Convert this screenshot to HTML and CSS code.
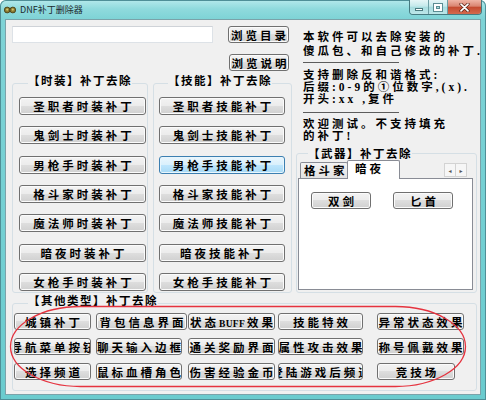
FILE: index.html
```html
<!DOCTYPE html>
<html lang="zh-CN">
<head>
<meta charset="utf-8">
<title>DNF补丁删除器</title>
<link rel="stylesheet" href="styles.css">
</head>
<body>
<div class="window">
  <div class="titlebar">
    <svg class="app-icon" width="12" height="8" viewBox="0 0 12 8">
      <rect x="2.5" y="2.5" width="7" height="3" fill="#5d5220"/>
      <circle cx="3.2" cy="4" r="2.9" fill="#8a7b33" stroke="#3f3712" stroke-width="0.8"/>
      <circle cx="8.8" cy="4" r="2.9" fill="#8a7b33" stroke="#3f3712" stroke-width="0.8"/>
      <circle cx="3.2" cy="3.6" r="1.1" fill="#d3c46e"/>
      <circle cx="8.8" cy="3.6" r="1.1" fill="#d3c46e"/>
    </svg>
    <span class="title">DNF补丁删除器</span>
    <div class="controls">
      <span class="ctl min"><i class="min-glyph"></i></span>
      <span class="ctl max"><i class="max-glyph"></i></span>
      <span class="ctl close">
        <svg width="11" height="9" viewBox="0 0 11 9">
          <path d="M2 1.2 L9 7.8 M9 1.2 L2 7.8" stroke="#5b2418" stroke-width="3.2" stroke-linecap="round"/>
          <path d="M2 1.2 L9 7.8 M9 1.2 L2 7.8" stroke="#ffffff" stroke-width="1.7" stroke-linecap="round"/>
        </svg>
      </span>
    </div>
  </div>
  <div class="client">
    <div class="top">
      <div class="left">
        <div class="row1">
          <input class="path" type="text" value="">
          <button class="btn browse-dir"><span>浏览目录</span></button>
        </div>
        <div class="row2">
          <button class="btn browse-help"><span>浏览说明</span></button>
        </div>
        <div class="groups">
          <fieldset class="group g-fashion">
            <legend>【时装】补丁去除</legend>
            <div class="stack">
              <button class="btn"><span>圣职者时装补丁</span></button>
              <button class="btn"><span>鬼剑士时装补丁</span></button>
              <button class="btn"><span>男枪手时装补丁</span></button>
              <button class="btn"><span>格斗家时装补丁</span></button>
              <button class="btn"><span>魔法师时装补丁</span></button>
              <button class="btn"><span>暗夜时装补丁</span></button>
              <button class="btn"><span>女枪手时装补丁</span></button>
            </div>
          </fieldset>
          <fieldset class="group g-skill">
            <legend>【技能】补丁去除</legend>
            <div class="stack">
              <button class="btn"><span>圣职者技能补丁</span></button>
              <button class="btn"><span>鬼剑士技能补丁</span></button>
              <button class="btn hot"><span>男枪手技能补丁</span></button>
              <button class="btn"><span>格斗家技能补丁</span></button>
              <button class="btn"><span>魔法师技能补丁</span></button>
              <button class="btn"><span>暗夜技能补丁</span></button>
              <button class="btn"><span>女枪手技能补丁</span></button>
            </div>
          </fieldset>
        </div>
      </div>
      <div class="right">
        <p class="para p1">本软件可以去除安装的<br>傻瓜包、和自己修改的补丁<span class="lat">.</span></p>
        <hr class="rule r1">
        <p class="para p2">支持删除反和谐格式<span class="lat">:</span><br>后缀<span class="lat">:0-9</span>的①位数字<span class="lat">,(x).</span><br>开头<span class="lat">:xx ,</span>复件</p>
        <hr class="rule r2">
        <p class="para p3">欢迎测试。不支持填充<br>的补丁<span class="lat">!</span></p>
        <fieldset class="group g-weapon">
          <legend>【武器】补丁去除</legend>
          <div class="tabstrip">
            <span class="tab">格斗家</span>
            <span class="tab active">暗夜</span>
            <span class="scroll"><span class="arr">&#9666;</span><span class="arr">&#9656;</span></span>
          </div>
          <div class="pane">
            <button class="btn wbtn"><span>双剑</span></button>
            <button class="btn wbtn"><span>匕首</span></button>
          </div>
        </fieldset>
      </div>
    </div>
    <fieldset class="group g-other">
      <legend>【其他类型】补丁去除</legend>
      <div class="other-grid">
        <button class="btn w77"><span>城镇补丁</span></button>
        <button class="btn w91"><span>背包信息界面</span></button>
        <button class="btn w87"><span>状态<b class="lat buff">BUFF</b>效果</span></button>
        <button class="btn w85"><span>技能特效</span></button>
        <button class="btn w87"><span>异常状态效果</span></button>

        <button class="btn w77"><span>导航菜单按钮</span></button>
        <button class="btn w86"><span>聊天输入边框</span></button>
        <button class="btn w87"><span>通关奖励界面</span></button>
        <button class="btn w85"><span>属性攻击效果</span></button>
        <button class="btn w87"><span>称号佩戴效果</span></button>

        <button class="btn w77"><span>选择频道</span></button>
        <button class="btn w86"><span>鼠标血槽角色</span></button>
        <button class="btn w87"><span>伤害经验金币</span></button>
        <button class="btn w85"><span>登陆游戏后频道</span></button>
        <button class="btn w78"><span>竞技场</span></button>
      </div>
    </fieldset>
  </div>
  <svg class="mark" width="486" height="400" viewBox="0 0 486 400">
    <rect x="10.5" y="306.5" width="455" height="80" rx="70" ry="40" fill="none" stroke="#e5333f" stroke-width="1.3"/>
  </svg>
</div>
</body>
</html>
```

FILE: styles.css
```css
* { box-sizing: border-box; }
html, body { margin: 0; padding: 0; background: #ffffff; }
body { width: 486px; height: 400px; overflow: hidden; }

.window {
  position: relative;
  width: 486px;
  height: 400px;
  display: flex;
  flex-direction: column;
  background: linear-gradient(180deg, #b4e9eb 0px, #8fdadd 9px, #7ed3d6 19px, #72cfd2 60%, #6acbce 100%);
  border-radius: 6px 6px 0 0;
  box-shadow: inset 0 0 0 1px #4f8f97;
  font-family: "Noto Sans CJK SC", sans-serif;
  font-size: 11.5px;
  font-weight: 700;
  letter-spacing: 3px;
  color: #000;
}
.lat { font-family: "Liberation Serif", serif; font-weight: 700; line-height: 0; }

/* title bar */
.titlebar { height: 19px; flex-shrink: 0; display: flex; align-items: flex-start; }
.app-icon { margin: 6px 0 0 4px; flex-shrink: 0; }
.title {
  margin: 4px 0 0 4px;
  font-family: "Noto Sans CJK SC", sans-serif;
  font-weight: 400;
  font-size: 9px;
  line-height: 12px;
  letter-spacing: 0;
  color: #1c2a2c;
}
.controls {
  margin-left: auto;
  margin-right: 4px;
  display: flex;
  height: 15px;
  border: 1px solid #467a80;
  border-top: 0;
  border-radius: 0 0 4px 4px;
  overflow: hidden;
}
.ctl { height: 14px; display: flex; align-items: center; justify-content: center; }
.min, .max {
  width: 19px;
  background: linear-gradient(180deg, #e6f6f7 0%, #c4e9eb 45%, #a6dcdf 50%, #bde7e9 100%);
  border-right: 1px solid #6d9ea4;
}
.min { align-items: flex-end; padding-bottom: 3px; }
.min-glyph { width: 8px; height: 3px; background: #fff; border: 1px solid #4d7b80; }
.max-glyph { width: 8px; height: 7px; border: 2px solid #fff; box-shadow: 0 0 0 1px #5b8d93, inset 0 0 0 1px #5b8d93; }
.close {
  width: 33px;
  background: linear-gradient(180deg, #efb4a6 0%, #d98470 45%, #c4492f 50%, #d46a4e 100%);
}

/* client area */
.client {
  flex: 1;
  margin: 0 5px 5px 5px;
  background: #f0f0f0;
  border: 1px solid #7ba2a9;
  padding: 6px 0 0 6px;
  overflow: hidden;
  display: flex;
  flex-direction: column;
}
.top { display: flex; align-items: flex-start; }
.left { width: 284px; flex-shrink: 0; }
.right { width: 184px; flex-shrink: 0; }

.row1, .row2 { display: flex; height: 17px; }
.row2 { margin-top: 11px; }
.path {
  width: 201px;
  height: 17px;
  margin: 0;
  border: 1px solid #dde2e7;
  border-top-color: #cfd3d8;
  background: #fff;
  padding: 0;
  flex-shrink: 0;
}

/* buttons */
.btn {
  font: inherit;
  letter-spacing: inherit;
  color: #000;
  margin: 0;
  padding: 0 0 0 3px;
  display: flex;
  align-items: center;
  justify-content: center;
  overflow: hidden;
  white-space: nowrap;
  border: 1px solid #707070;
  border-radius: 3px;
  background: linear-gradient(180deg, #f3f3f3 0%, #ececec 48%, #dedede 50%, #d0d0d0 100%);
  box-shadow: inset 0 0 0 1px #fbfbfb;
  flex-shrink: 0;
}
.btn span { flex-shrink: 0; line-height: 14px; }
.btn.hot {
  border-color: #3c7fb1;
  background: linear-gradient(180deg, #eaf6fd 0%, #d9f0fc 48%, #bee6fd 50%, #a7d9f5 100%);
  box-shadow: inset 0 0 0 1px #e8f6fd;
}
.btn.browse-dir { margin-left: 15px; width: 61px; height: 17px; }
.btn.browse-help { margin-left: 217px; width: 60px; height: 17px; }
.buff { font-size: 9.5px; letter-spacing: 0.3px; margin-right: 2px; }

/* group boxes */
.group {
  margin: 0;
  min-width: 0;
  border: 1px solid #d5dfe5;
  border-radius: 3px;
}
.group legend {
  padding: 0 0 6px 0;
  line-height: 14px;
  letter-spacing: 1.5px;
}
.groups { display: flex; gap: 5px; margin-top: 2px; }
.g-fashion { width: 136px; padding: 4px 0 1px 6px; }
.g-fashion legend { margin-left: 9px; }
.g-skill { width: 139px; padding: 4px 0 1px 5px; }
.g-skill legend { margin-left: 9px; }
.stack { display: flex; flex-direction: column; gap: 11.33px; }
.stack .btn { height: 18px; }
.g-fashion .btn { width: 127px; }
.g-skill .btn { width: 126px; }

/* right column */
.para { margin: 0; padding-left: 7px; white-space: nowrap; }
.p1 { margin-top: 3px; line-height: 14px; }
.p2 { margin-top: 5px; line-height: 12px; }
.p3 { margin-top: 4px; line-height: 12px; }
.rule { margin: 5px 0 0 7px; width: 96px; height: 0; border: 0; border-top: 1px solid #5c5c5c; }
.r2 { margin-top: 8px; }

.g-weapon { margin-top: 5px; width: 181px; padding: 0 3px 2px 1px; }
.g-weapon legend { padding-bottom: 0; margin-left: 10px; }
.tabstrip { display: flex; align-items: flex-end; height: 18px; padding-left: 2px; }
.tab {
  height: 16px;
  width: 48px;
  flex-shrink: 0;
  white-space: nowrap;
  overflow: visible;
  border: 1px solid #898c95;
  border-bottom: 0;
  border-radius: 2px 2px 0 0;
  background: linear-gradient(180deg, #f3f3f3, #e2e2e2);
  line-height: 15px;
  padding-left: 3px;
  letter-spacing: 3px;
}
.tab.active {
  height: 19px;
  width: 53px;
  margin-left: -1px;
  margin-bottom: -1px;
  background: #fff;
  line-height: 14px;
  padding-left: 7px;
  position: relative;
  z-index: 1;
}
.scroll { margin-left: auto; margin-right: 6px; align-self: flex-start; margin-top: 3px; display: flex; }
.arr {
  width: 12px;
  height: 14px;
  border: 1px solid #d3d3d3;
  background: #f6f6f6;
  font-family: "DejaVu Sans", sans-serif;
  font-weight: 400;
  font-size: 6px;
  letter-spacing: 0;
  color: #555;
  display: flex;
  align-items: center;
  justify-content: center;
}
.arr + .arr { margin-left: -1px; }
.pane {
  height: 112px;
  border: 1px solid #898c95;
  background: #fff;
  padding: 13px 0 0 12px;
  display: flex;
  gap: 22px;
  align-items: flex-start;
}
.btn.wbtn { width: 60px; height: 17px; }

/* other group */
.g-other { width: 465px; padding: 0 0 10px 1px; }
.g-other legend { margin-left: 14px; }
.other-grid {
  display: grid;
  grid-template-columns: 82px 92px 90px 99px 87px;
  grid-auto-rows: 17px;
  row-gap: 8px;
}
.btn.w77 { width: 77px; }
.btn.w78 { width: 78px; }
.btn.w85 { width: 85px; }
.btn.w86 { width: 86px; }
.btn.w87 { width: 87px; }
.btn.w91 { width: 91px; }

.mark { position: absolute; left: 0; top: 0; pointer-events: none; }
```
